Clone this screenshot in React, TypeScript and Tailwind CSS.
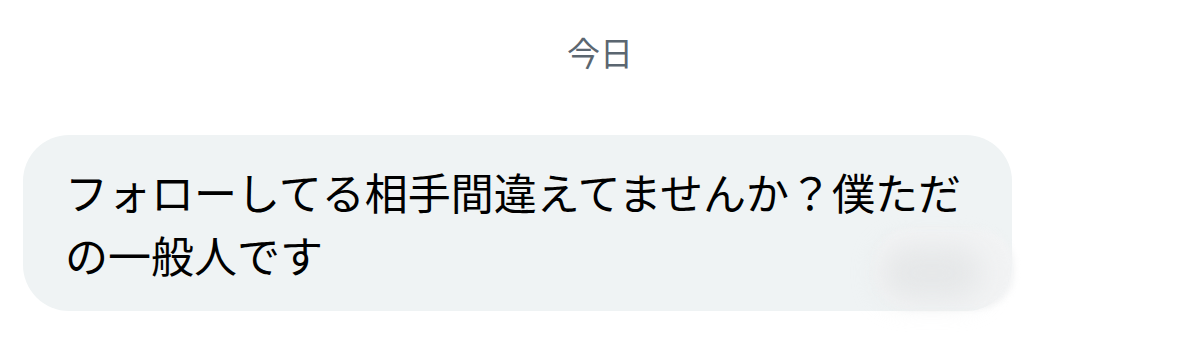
export default function App() {
  return (
    <div className="w-[1200px] h-[352px] bg-white overflow-hidden" style={{ fontFamily: '"Noto Sans CJK JP", "Noto Sans", sans-serif' }}>
      {/* date divider */}
      <div className="pt-[30px] text-center text-[33px] leading-[44px] text-[#5b6670]">今日</div>

      {/* received message */}
      <div className="relative mt-[61px] ml-[23px] w-[989px] rounded-[46px] bg-[#eff3f4] pl-[42px] pr-[38px] pt-[25px] pb-[25px]">
        <p className="text-[43px] leading-[63px] text-black">
          フォローしてる相手間違えてませんか？僕ただの一般人です
        </p>
        {/* blurred timestamp */}
        <div className="absolute right-[-2px] bottom-[2px] w-[140px] h-[80px] rounded-[36px] bg-[#f2f3f4] blur-[3px]"></div>
        <div className="absolute right-[30px] bottom-[12px] w-[100px] h-[52px] rounded-full bg-[#e5e7e8] blur-[14px]"></div>
      </div>
    </div>
  );
}
